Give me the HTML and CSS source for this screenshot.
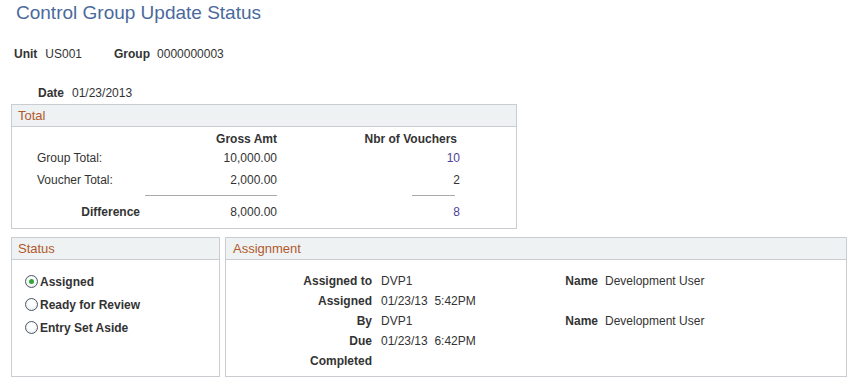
FILE: index.html
```html
<!DOCTYPE html>
<html lang="en">
<head>
    <meta charset="UTF-8">
    <title>Control Group Update Status</title>
    <link rel="stylesheet" href="styles.css">
</head>
<body>
<h1 class="title">Control Group Update Status</h1>

<div class="keys">
    <span class="lbl">Unit</span><span class="val unit-val">US001</span>
    <span class="lbl">Group</span><span class="val">0000000003</span>
</div>

<div class="date-row">
    <span class="lbl">Date</span><span class="val">01/23/2013</span>
</div>

<div class="box total">
    <div class="box-hd">Total</div>
    <div class="total-grid">
        <div></div>
        <div class="num lbl">Gross Amt</div>
        <div class="num lbl nbr-hd">Nbr of Vouchers</div>

        <div class="row-lbl">Group Total:</div>
        <div class="num">10,000.00</div>
        <div class="num link">10</div>

        <div class="row-lbl">Voucher Total:</div>
        <div class="num">2,000.00</div>
        <div class="num">2</div>

        <div></div>
        <div class="rule"><span class="line line-wide"></span></div>
        <div class="rule"><span class="line line-short"></span></div>

        <div class="num lbl diff">Difference</div>
        <div class="num">8,000.00</div>
        <div class="num link">8</div>
    </div>
</div>

<div class="bottom">
    <div class="box status">
        <div class="box-hd">Status</div>
        <div class="radios">
            <label class="radio"><span class="dot on"></span>Assigned</label>
            <label class="radio"><span class="dot"></span>Ready for Review</label>
            <label class="radio"><span class="dot"></span>Entry Set Aside</label>
        </div>
    </div>

    <div class="box assign">
        <div class="box-hd">Assignment</div>
        <div class="assign-grid">
            <div class="lbl a-lbl">Assigned to</div>
            <div class="a-val">DVP1</div>
            <div class="lbl a-name">Name</div>
            <div class="a-nval">Development User</div>

            <div class="lbl a-lbl">Assigned</div>
            <div class="a-val">01/23/13&nbsp; 5:42PM</div>
            <div></div>
            <div></div>

            <div class="lbl a-lbl">By</div>
            <div class="a-val">DVP1</div>
            <div class="lbl a-name">Name</div>
            <div class="a-nval">Development User</div>

            <div class="lbl a-lbl">Due</div>
            <div class="a-val">01/23/13&nbsp; 6:42PM</div>
            <div></div>
            <div></div>

            <div class="lbl a-lbl">Completed</div>
            <div class="a-val"></div>
            <div></div>
            <div></div>
        </div>
    </div>
</div>
</body>
</html>
```

FILE: styles.css
```css
*{
    margin: 0;
    padding: 0;
    box-sizing: border-box;
}
body{
    background: #fff;
    font-family: "Liberation Sans", Arial, sans-serif;
    font-size: 12px;
    color: #333;
    width: 853px;
}
.title{
    font-size: 19px;
    font-weight: normal;
    line-height: 22px;
    color: #4a6a9c;
    padding: 2px 0 0 16px;
}
.lbl{
    font-weight: bold;
}
.keys{
    display: flex;
    line-height: 16px;
    margin-top: 22px;
    padding-left: 14px;
}
.keys .lbl{
    margin-right: 8px;
}
.keys .lbl + .val + .lbl{
    margin-right: 7px;
}
.unit-val{
    margin-right: 32px;
}
.date-row{
    display: flex;
    line-height: 16px;
    margin-top: 23px;
    padding-left: 38px;
}
.date-row .lbl{
    margin-right: 8px;
}

/* group boxes */
.box{
    border: 1px solid #c9cdd1;
    background: #fff;
}
.box-hd{
    height: 22px;
    line-height: 21px;
    border-bottom: 1px solid #c9cdd1;
    background: #eff2f3;
    color: #b05a2c;
    font-size: 13px;
    padding-left: 6px;
}
.total{
    width: 506px;
    margin: 3px 0 0 11px;
    padding-bottom: 5px;
}
.total-grid{
    display: grid;
    grid-template-columns: 133px 132px 183px;
    grid-template-rows: 16px 22px 22px 10px 22px;
    align-items: center;
    padding-top: 4px;
}
.num{
    text-align: right;
}
.nbr-hd{
    padding-right: 3px;
}
.row-lbl{
    padding-left: 25px;
}
.diff{
    padding-right: 5px;
}
.link{
    color: #4f3f96;
}
.rule{
    display: flex;
    justify-content: flex-end;
    align-self: start;
    padding-top: 4px;
}
.line{
    display: block;
    height: 1px;
    background: #a9aaac;
}
.line-wide{
    width: 132px;
}
.line-short{
    width: 43px;
    margin-right: 5px;
}

.bottom{
    display: flex;
    gap: 5px;
    margin: 8px 0 0 11px;
}
.status{
    width: 209px;
    height: 140px;
}
.assign{
    width: 622px;
    height: 140px;
}
.assign .box-hd{
    padding-left: 7px;
}
.radios{
    padding: 10px 0 0 13px;
}
.radio{
    display: flex;
    align-items: center;
    height: 23px;
    font-weight: bold;
}
.dot{
    width: 13px;
    height: 13px;
    border: 1px solid #4c5663;
    border-radius: 50%;
    background: radial-gradient(circle at 50% 40%, #fff 30%, #dfe3e8 100%);
    margin-right: 2px;
    position: relative;
}
.dot.on::after{
    content: "";
    position: absolute;
    left: 3px;
    top: 3px;
    width: 5px;
    height: 5px;
    border-radius: 50%;
    background: #2fa53a;
}
.assign-grid{
    display: grid;
    grid-template-columns: 146px 192px 34px 1fr;
    grid-auto-rows: 20px;
    align-items: center;
    padding-top: 11px;
}
.a-lbl{
    text-align: right;
}
.a-val{
    padding-left: 9px;
}
.a-name{
    text-align: right;
}
.a-nval{
    padding-left: 7px;
}
```
